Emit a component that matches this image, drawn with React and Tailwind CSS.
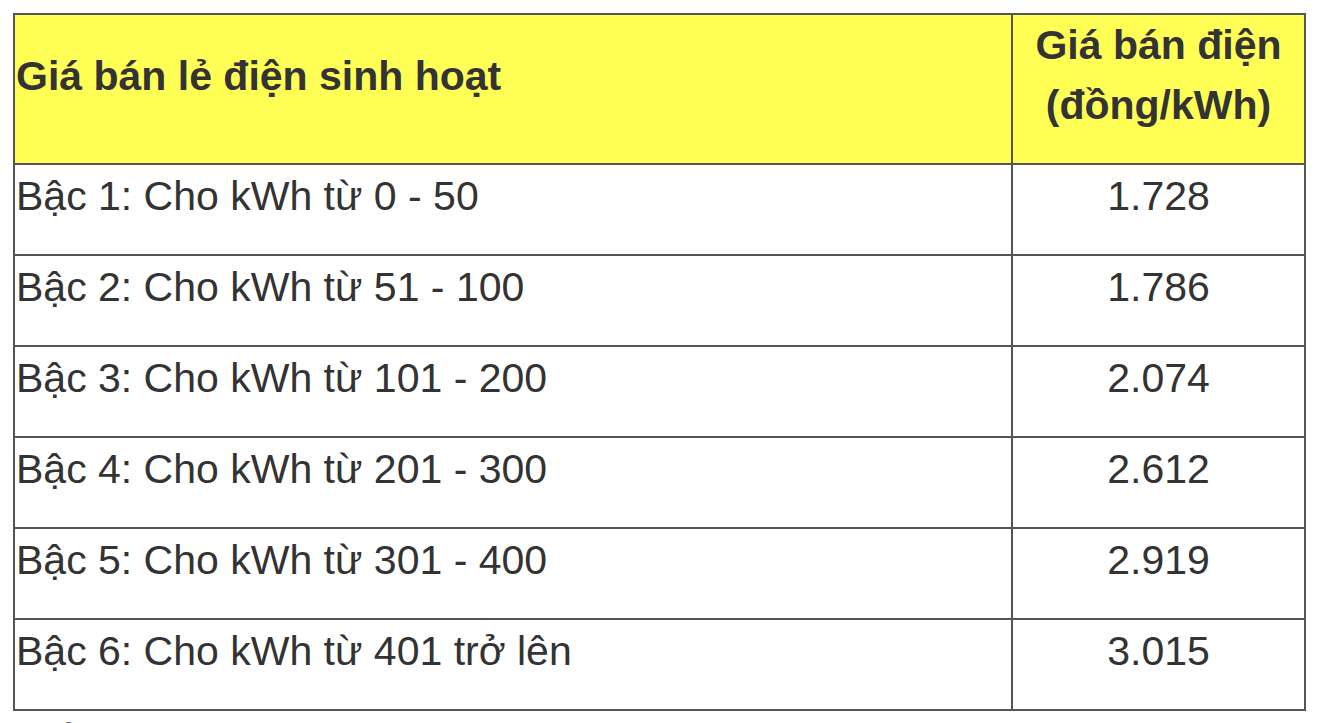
import React from "react";

const rows = [
  { label: "Bậc 1: Cho kWh từ 0 - 50", price: "1.728" },
  { label: "Bậc 2: Cho kWh từ 51 - 100", price: "1.786" },
  { label: "Bậc 3: Cho kWh từ 101 - 200", price: "2.074" },
  { label: "Bậc 4: Cho kWh từ 201 - 300", price: "2.612" },
  { label: "Bậc 5: Cho kWh từ 301 - 400", price: "2.919" },
  { label: "Bậc 6: Cho kWh từ 401 trở lên", price: "3.015" },
];

export default function App() {
  return (
    <div
      className="w-[1320px] h-[723px] overflow-hidden bg-white text-[#333] text-[41px] leading-[60px]"
      style={{ fontFamily: '"Liberation Sans", Arial, sans-serif' }}
    >
      <div className="ml-[13px] mt-[13px] w-[1293px] border-2 border-[#555]">
        {/* header */}
        <div className="flex h-[148px] bg-[#ffff55] font-bold">
          <div className="w-[996px] flex items-center pb-[27px] pl-[1px]">
            Giá bán lẻ điện sinh hoạt
          </div>
          <div className="flex-1 border-l-2 border-[#555] flex items-center justify-center pb-[28px] text-center">
            <div>
              Giá bán điện
              <br />
              (đồng/kWh)
            </div>
          </div>
        </div>

        {rows.map((r) => (
          <div key={r.label} className="flex h-[91px] border-t-2 border-[#555]">
            <div className="w-[996px] flex items-center pb-[27px] pl-[1px]">{r.label}</div>
            <div className="flex-1 border-l-2 border-[#555] flex items-center justify-center pb-[27px]">
              {r.price}
            </div>
          </div>
        ))}
      </div>

      <p className="ml-[15px] mt-[1px] whitespace-nowrap">
        Biểu giá bán lẻ điện sinh hoạt mới nhất áp dụng từ ngày 10/5/2025
      </p>
    </div>
  );
}
